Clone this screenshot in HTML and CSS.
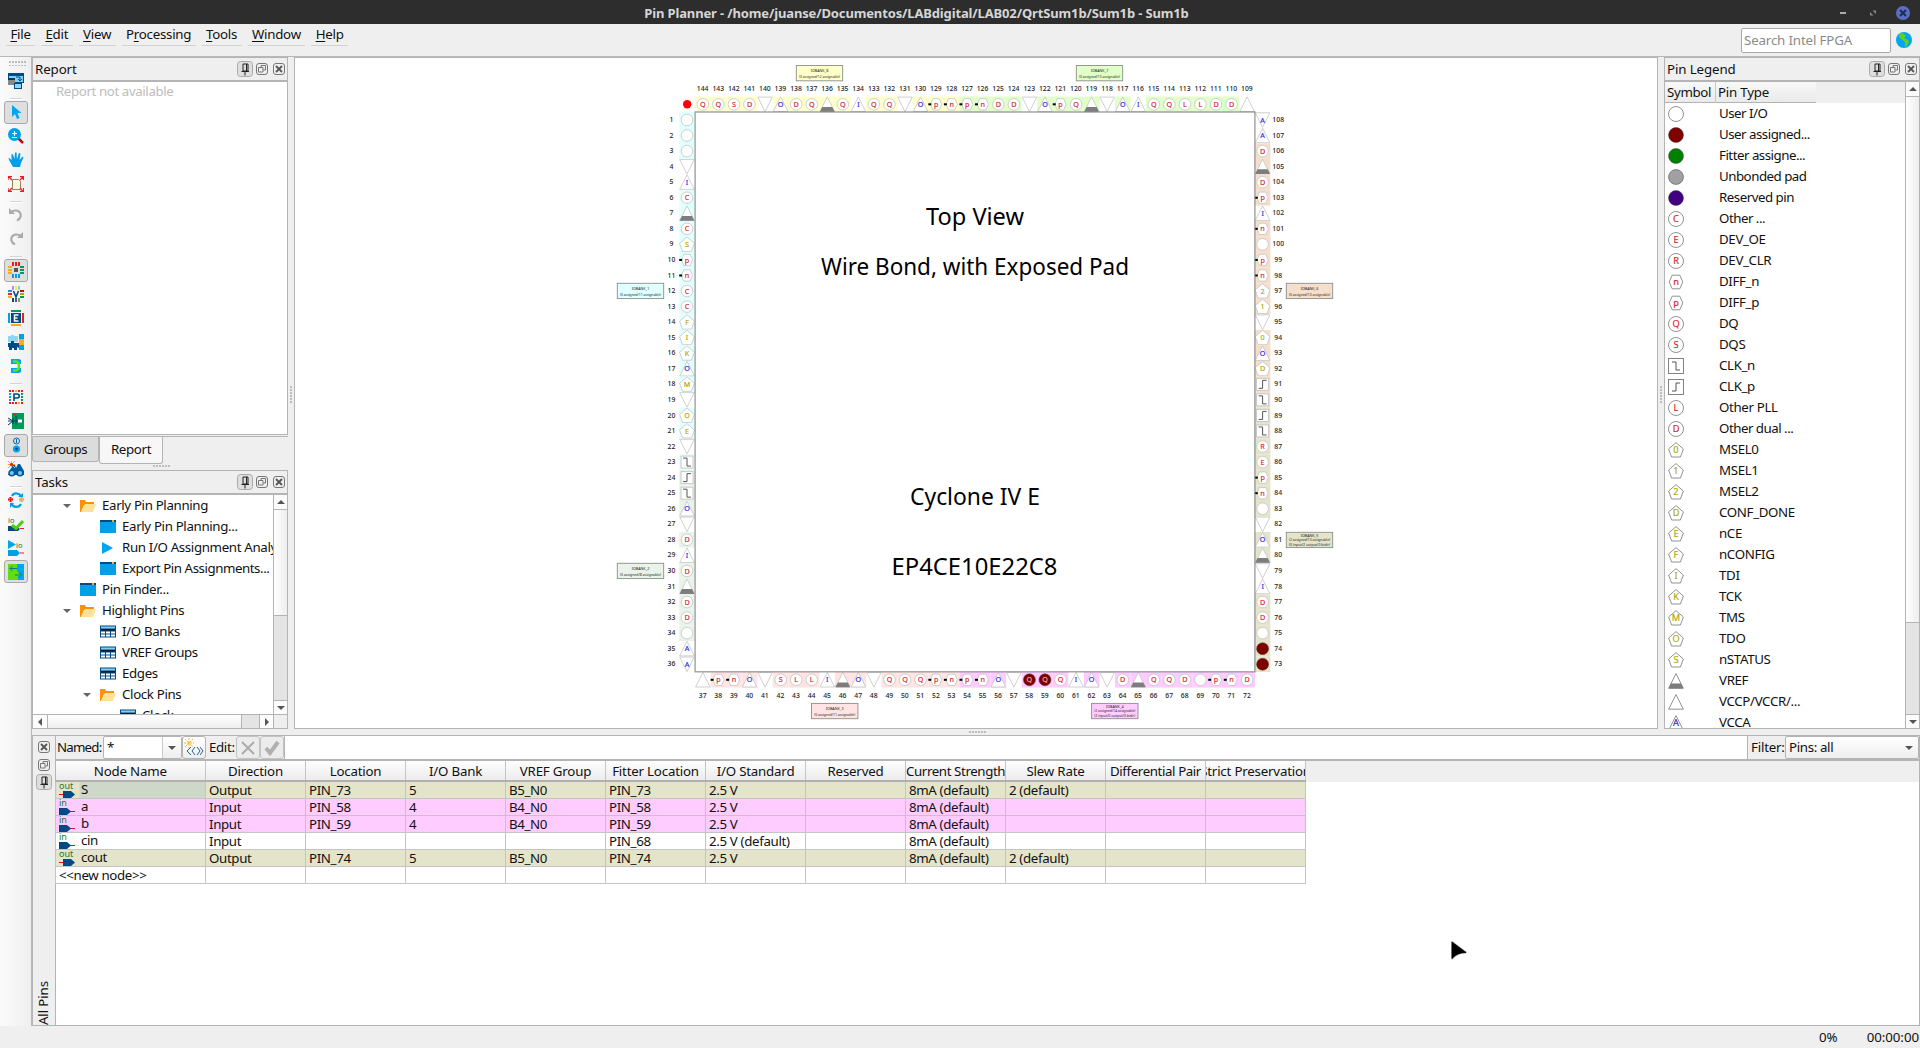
FILE: index.html
```html
<!DOCTYPE html>
<html lang="en">
<head>
<meta charset="utf-8">
<title>Pin Planner</title>
<link rel="stylesheet" href="styles.css">
</head>
<body>
<svg width="0" height="0" class="defs">
  <symbol id="pin" viewBox="0 0 16 16"><rect x=".5" y=".5" width="15" height="15" rx="3" class="pinbg"/><path d="M6 3h5v7H6zM4.500 10.500h7.500M8 11v3.500M9.500 3v7" fill="none" stroke="#222"/></symbol>
  <symbol id="float" viewBox="0 0 12 12"><rect x=".5" y=".5" width="11" height="11" rx="2.500" fill="none" stroke="#777"/><path d="M2.500 4.500h4.500v4.500H2.500zM5 4V2.500h4.500V7H7.500" fill="none" stroke="#777"/></symbol>
  <symbol id="close" viewBox="0 0 12 12"><rect x=".5" y=".5" width="11" height="11" rx="2.500" fill="none" stroke="#777"/><path d="M3 3l6 6M9 3l-6 6" stroke="#555" stroke-width="1.800"/></symbol>
  <symbol id="folder" viewBox="0 0 16 14"><path d="M0 13V1h5l1 2h8v3H4L1 13z" fill="#fb9200"/><path d="M1 13l4-8h11l-3 8z" fill="#ffe19a"/></symbol>
  <symbol id="window" viewBox="0 0 16 14"><path d="M0 1h16v12H0z" fill="#009fe8"/><path d="M0 0h16v2H0z" fill="#004a86"/><path d="M12 0h2v2h-2z" fill="#ffa51f"/></symbol>
  <symbol id="grid" viewBox="0 0 16 13"><path d="M0 0h16v12H0z" fill="#004a86"/><path d="M1 1h14v2H1z" fill="#7fd0f2"/><path d="M1 3.500h14V5H1z" fill="#001a33"/><path d="M1 6h4v2H1zM6 6h4v2H6zM11 6h4v2h-4zM1 9h4v2H1zM6 9h4v2H6zM11 9h4v2h-4z" fill="#fff"/></symbol>
  <symbol id="play" viewBox="0 0 16 14"><path d="M2 1v12l11-6z" fill="#00a6f4"/></symbol>
  <symbol id="out" viewBox="0 0 16 16"><text x="0" y="7" class="dir">out</text><path d="M0 12.500h5" stroke="#d11"/><path d="M4 9h8l4 3.500-4 3.500H4z" fill="#004a86"/></symbol>
  <symbol id="in" viewBox="0 0 16 16"><text x="0" y="7" class="dir">in</text><path d="M11 12.500h5" stroke="#d11"/><path d="M0 9h8l4 3.500-4 3.500H0z" fill="#004a86"/></symbol>
</svg>

<header class="titlebar">
  <h1>Pin Planner - /home/juanse/Documentos/LABdigital/LAB02/QrtSum1b/Sum1b - Sum1b</h1>
  <svg class="winbtns" width="80" height="24" viewBox="0 0 80 24"><path d="M3 12h6" stroke="#aaa" stroke-width="2"/><path d="M35.500 9.500h3.500V13zM33 11v3.500h3.500z" fill="#888"/><circle cx="66" cy="12" r="7" fill="#5a6fc4"/><path d="M63 9l6 6M69 9l-6 6" stroke="#222a4d" stroke-width="2"/></svg>
</header>

<nav class="menubar">
  <ul>
    <li><u>F</u>ile</li><li><u>E</u>dit</li><li><u>V</u>iew</li><li>P<u>r</u>ocessing</li><li><u>T</u>ools</li><li><u>W</u>indow</li><li><u>H</u>elp</li>
  </ul>
  <div class="search">Search Intel FPGA</div>
  <svg class="globe" width="16" height="16" viewBox="0 0 16 16"><circle cx="8" cy="8" r="8" fill="#00a6f4"/><path d="M3 2l4-1 3 3-2 2 4 2 1 2-2 4-2 1V10L5 7 3 5z" fill="#61d019"/></svg>
</nav>

<div class="work">
  <aside class="tools">
    <i class="grip"></i>
    <button><svg viewBox="0 0 16 16"><path d="M0 0h16v10H0z" fill="#004a86"/><path d="M1 3h14v6H1z" fill="#7fd0f2"/><path d="M0 5h7v7H0z" fill="#888"/><path d="M0 5h7v2H0z" fill="#003a66"/><path d="M6 10h8v6H6z" fill="#004a86"/><path d="M7 11h6v4H7z" fill="#8ed6f7"/><path d="M8 4h4v4M10 6l2 2 2-2" stroke="#004a86" fill="none"/></svg></button>
    <hr>
    <button class="on"><svg viewBox="0 0 16 16"><path d="M4 1v12l3-3 2 5 2.500-1-2-5h4z" fill="#00a6f4"/></svg></button>
    <button><svg viewBox="0 0 16 16"><path d="M10 10l5 5" stroke="#b01116" stroke-width="2.500"/><circle cx="6.500" cy="6.500" r="6.500" fill="#009fe8"/><path d="M4 5.500h5M6.500 3v5M4 9.500h5" stroke="#fff" stroke-width="1.200"/></svg></button>
    <button><svg viewBox="0 0 16 16"><path d="M5 15L1 8 .5 5.500l3 2.500L3.500 2l1.500.5L6.500 7 7 .5h1.500L9 7l2-6 1.500.5L11.500 8l3-3.500 1 1L13 11l-1 4z" fill="#009fe8"/></svg></button>
    <button><svg viewBox="0 0 16 16"><path d="M4.500 3.500h6l2 2v8h-8z" fill="#fff8df" stroke="#9b8062"/><path d="M0 0l4 4M16 0l-4 4M0 16l4-4M16 16l-4-4M0 4V.5h4M12 .5h3.500V4M0 12v3.500h4M12 15.500h3.500V12" stroke="#ed1c24" stroke-width="1.300" fill="none"/></svg></button>
    <hr>
    <button><svg viewBox="0 0 16 16"><path d="M3 5c8-5 14 4 6 8.500" stroke="#aaa" stroke-width="2.200" fill="none"/><path d="M1 1v6h6z" fill="#aaa"/></svg></button>
    <button><svg viewBox="0 0 16 16"><path d="M13 5C5 0-1 9 7 13.500" stroke="#aaa" stroke-width="2.200" fill="none"/><path d="M15 1v6H9z" fill="#aaa"/></svg></button>
    <hr>
    <button class="on"><svg viewBox="0 0 16 16"><path d="M4 0h2v4H4zM7 0h2v4H7zM10 0h2v4h-2z" fill="#ed1c24"/><path d="M0 4h4v2H0zM0 7h4v2H0zM0 10h4v2H0z" fill="#fbab18"/><path d="M12 4h4v2h-4zM12 7h4v2h-4zM12 10h4v2h-4z" fill="#009b5a"/><path d="M4 12h2v4H4zM7 12h2v4H7zM10 12h2v4h-2z" fill="#009fe8"/><path d="M6 6h4v4H6z" fill="#555"/></svg></button>
    <button><svg viewBox="0 0 16 16"><path d="M4 0h2v4H4z" fill="#c58ae0"/><path d="M7 0h2v4H7z" fill="#ffe45a"/><path d="M10 0h2v4h-2z" fill="#7cd8d0"/><path d="M0 4h4v2H0z" fill="#009fe8"/><path d="M0 7h4v2H0z" fill="#ed1c24"/><path d="M0 10h4v2H0z" fill="#fbab18"/><path d="M12 4h4v2h-4z" fill="#b01116"/><path d="M12 7h4v2h-4z" fill="#a8a800"/><path d="M12 10h4v2h-4z" fill="#009b5a"/><path d="M4 12h2v4H4z" fill="#004a86"/><path d="M7 12h2v4H7z" fill="#7a3da8"/><path d="M10 12h2v4h-2z" fill="#61b84a"/><path d="M5.500 5L8 11l2.500-6" stroke="#004a86" stroke-width="1.600" fill="none"/></svg></button>
    <button><svg viewBox="0 0 16 16"><path d="M3 0h10v2H3z" fill="#009b5a"/><path d="M0 3h2v10H0z" fill="#009fe8"/><path d="M14 3h2v10h-2z" fill="#ed1c24"/><path d="M3 14h10v2H3z" fill="#fbab18"/><path d="M3 3h10v10H3z" fill="#004a86"/><path d="M10.500 5H6.500v6h4M6.500 8h3" stroke="#fff" stroke-width="1.500" fill="none"/></svg></button>
    <button><svg viewBox="0 0 16 16"><path d="M0 2h3V1h3v1h4v6H0z" fill="#8ed6f7"/><path d="M0 9h3V7h3v2h5v5l-2-1v3H6v-2H4v2H1v-3H0z" fill="#004a86"/><path d="M11 0h5v5h-5zM11 11h5v5h-5z" fill="#009fe8"/><path d="M11 5h5v6h-5z" fill="#fbab18"/></svg></button>
    <button><svg viewBox="0 0 16 16"><path d="M3 1h8l2 1v4H3zM3 10h10v4l-2 1H3z" fill="#00a6f4"/><path d="M5 3.500h3c4 1 4 8 0 9H5" stroke="#61e019" stroke-width="2.400" fill="none"/></svg></button>
    <hr>
    <button><svg viewBox="0 0 16 16"><path d="M1 2h14M1 14h14" stroke="#ed1c24" stroke-width="2" stroke-dasharray="2 1"/><path d="M2 4v9" stroke="#009fe8" stroke-width="2" stroke-dasharray="2 1"/><path d="M14 4v9" stroke="#009b5a" stroke-width="2" stroke-dasharray="2 1"/><path d="M7 2h2M10 14h2" stroke="#fbab18" stroke-width="2"/><path d="M6 12V5h3c3 0 3 4 0 4H6" stroke="#004a86" stroke-width="1.600" fill="none"/></svg></button>
    <button><svg viewBox="0 0 16 16"><path d="M4 0h12v16H4z" fill="#009b5a"/><path d="M0 5l5 3-5 4M0 8h14M5 5v6M8 3v9" stroke="#003a66" fill="none"/><path d="M5 2l2-2 2 3z" fill="#ed1c24"/><path d="M10 6.500h4v3h-4z" fill="#fff"/></svg></button>
    <button class="on"><svg viewBox="0 0 16 16"><circle cx="8.500" cy="4" r="3" fill="none" stroke="#0068b5"/><path d="M8.500 2v4" stroke="#0068b5"/><circle cx="8.500" cy="12" r="3.600" fill="#00a6f4"/><circle cx="8.500" cy="12" r="1.400" fill="#004a86"/></svg></button>
    <button><svg viewBox="0 0 16 16"><path d="M2 9l3-5h2l1 3 2-4h2l4 7v4H0z" fill="#005b9e"/><circle cx="3.800" cy="12" r="3.500" fill="#005b9e"/><circle cx="12" cy="12" r="3.500" fill="#005b9e"/><circle cx="3.800" cy="12" r="2" fill="#7fc4ee"/><circle cx="12" cy="12" r="2" fill="#7fc4ee"/><path d="M0 0l7 7M7 0L0 7M3.500 0v7M0 3.500h7" stroke="#ffb400"/><circle cx="3.500" cy="3.500" r="1.600" fill="#ed1c24"/></svg></button>
    <hr>
    <button><svg viewBox="0 0 16 16"><path d="M4 4c2-4 8-3 9 1M3 11c2 5 8 5 10 1" stroke="#009fe8" stroke-width="2.200" fill="none"/><path d="M10 5h5V1zM6 11H2v5z" fill="#009fe8"/><circle cx="2.500" cy="7.500" r="2" fill="none" stroke="#ed1c24"/><path d="M0 7.500h5M2.500 5v5" stroke="#ed1c24"/><circle cx="13.500" cy="7.500" r="2" fill="none" stroke="#fbab18"/><path d="M11 7.500h5M13.500 5v5" stroke="#fbab18"/></svg></button>
    <button><svg viewBox="0 0 16 16"><text x="0" y="7" class="io">io</text><path d="M0 10h8l4 3-2 2H0z" fill="#004a86"/><path d="M12 12.500h4" stroke="#ed1c24"/><path d="M4 9l4 3.500L15 5" stroke="#4cd010" stroke-width="3" fill="none"/></svg></button>
    <button><svg viewBox="0 0 16 16"><path d="M0 0l8 4.500L0 9z" fill="#00a6f4"/><path d="M0 10h9l3 3-3 3H0z" fill="#009fe8"/><path d="M12 13h4" stroke="#ed1c24"/><text x="8" y="7.500" class="io">io</text></svg></button>
    <button class="on"><svg viewBox="0 0 16 16"><path d="M0 0h16v16H0z" fill="#61dd14"/><path d="M9 0h7v16h-6v-4h4l-5-5z" fill="#00a6f4"/><path d="M2 4.500h7M4.500 2L2 4.500 4.500 7M7 11h6M11 8.500l2.500 2.500-2.500 2.500" stroke="#00807c" fill="none"/></svg></button>
  </aside>

  <div class="area">
    <div class="upper">
      <div class="leftcol">
        <section class="panel report">
          <h2>Report<span class="ctl"><svg class="p"><use href="#pin"/></svg><svg><use href="#float"/></svg><svg><use href="#close"/></svg></span></h2>
          <div class="body"><p class="none">Report not available</p></div>
        </section>
        <div class="tabs"><span class="tab">Groups</span><span class="tab active">Report</span></div>
        <i class="dots"></i>
        <section class="panel tasks">
          <h2>Tasks<span class="ctl"><svg class="p"><use href="#pin"/></svg><svg><use href="#float"/></svg><svg><use href="#close"/></svg></span></h2>
          <div class="scroller">
            <ul class="tree">
              <li class="l1 open"><svg><use href="#folder"/></svg>Early Pin Planning</li>
              <li class="l2"><svg><use href="#window"/></svg>Early Pin Planning...</li>
              <li class="l2"><svg><use href="#play"/></svg>Run I/O Assignment Analysis</li>
              <li class="l2 tight"><svg><use href="#window"/></svg>Export Pin Assignments...</li>
              <li class="l1"><svg><use href="#window"/></svg>Pin Finder...</li>
              <li class="l1 open"><svg><use href="#folder"/></svg>Highlight Pins</li>
              <li class="l2"><svg><use href="#grid"/></svg>I/O Banks</li>
              <li class="l2"><svg><use href="#grid"/></svg>VREF Groups</li>
              <li class="l2"><svg><use href="#grid"/></svg>Edges</li>
              <li class="l2 open"><svg><use href="#folder"/></svg>Clock Pins</li>
              <li class="l3"><svg><use href="#grid"/></svg>Clock</li>
            </ul>
            <div class="vbar"><b class="up"></b><i></i><b class="down"></b></div>
            <div class="hbar"><b class="left"></b><i></i><b class="right"></b></div>
            <div class="corner"></div>
          </div>
        </section>
      </div>

      <i class="vdots"></i>
      <main class="canvas"><svg id="chip" width="1362" height="670" viewBox="295 58 1362 670"></svg></main>
      <i class="vdots"></i>

      <section class="panel legend">
        <h2>Pin Legend<span class="ctl"><svg class="p"><use href="#pin"/></svg><svg><use href="#float"/></svg><svg><use href="#close"/></svg></span></h2>
        <div class="legendbody">
          <div class="legendlist">
            <div class="lhead"><span>Symbol</span><span>Pin Type</span></div>
            <ul id="legend"></ul>
          </div>
          <div class="vbar"><b class="up"></b><i></i><b class="down"></b></div>
        </div>
      </section>
    </div>

    <i class="hdots"></i>

    <section class="allpins">
      <div class="side">
        <svg><use href="#close"/></svg><svg><use href="#float"/></svg><svg class="p"><use href="#pin"/></svg>
        <span>All Pins</span>
      </div>
      <div class="pinarea">
        <div class="editbar">
          <label class="named">Named:</label>
          <div class="combo"><span>*</span><b></b></div>
          <button><svg width="20" height="20" viewBox="0 0 20 20"><path d="M1 1l8 8M9 1L1 9M5 0v10M0 5h10" stroke="#fbb518" stroke-dasharray="2 1"/><path d="M7 9l-4 4 4 4M11 9l-3 4 3 4M13 9l3 4-3 4M16 9l3 4-3 4" stroke="#2b6192" fill="none"/></svg></button>
          <label class="edit">Edit:</label>
          <button class="off"><svg width="20" height="20" viewBox="0 0 20 20"><path d="M4 4l12 12M16 4L4 16" stroke="#aaa" stroke-width="1.800"/></svg></button>
          <button class="off"><svg width="20" height="20" viewBox="0 0 20 20"><path d="M4 10l4 5 8-11" stroke="#b0b0b0" stroke-width="4" fill="none"/></svg></button>
          <div class="field"></div>
          <label class="filter">Filter:</label>
          <div class="combo wide"><span>Pins: all</span><b></b></div>
        </div>
        <div class="sheet">
          <table>
            <colgroup><col class="first"><col span="11"></colgroup>
            <thead><tr><th>Node Name</th><th>Direction</th><th>Location</th><th>I/O Bank</th><th>VREF Group</th><th>Fitter Location</th><th>I/O Standard</th><th>Reserved</th><th>Current Strength</th><th>Slew Rate</th><th>Differential Pair</th><th class="cut"><span>Strict Preservation</span></th></tr></thead>
            <tbody>
              <tr class="b5"><td class="node sel"><svg><use href="#out"/></svg><span>S</span></td><td>Output</td><td>PIN_73</td><td>5</td><td>B5_N0</td><td>PIN_73</td><td>2.5 V</td><td></td><td>8mA (default)</td><td>2 (default)</td><td></td><td></td></tr>
              <tr class="b4"><td class="node"><svg><use href="#in"/></svg><span>a</span></td><td>Input</td><td>PIN_58</td><td>4</td><td>B4_N0</td><td>PIN_58</td><td>2.5 V</td><td></td><td>8mA (default)</td><td></td><td></td><td></td></tr>
              <tr class="b4"><td class="node"><svg><use href="#in"/></svg><span>b</span></td><td>Input</td><td>PIN_59</td><td>4</td><td>B4_N0</td><td>PIN_59</td><td>2.5 V</td><td></td><td>8mA (default)</td><td></td><td></td><td></td></tr>
              <tr><td class="node"><svg><use href="#in"/></svg><span>cin</span></td><td>Input</td><td></td><td></td><td></td><td>PIN_68</td><td>2.5 V (default)</td><td></td><td>8mA (default)</td><td></td><td></td><td></td></tr>
              <tr class="b5"><td class="node"><svg><use href="#out"/></svg><span>cout</span></td><td>Output</td><td>PIN_74</td><td>5</td><td>B5_N0</td><td>PIN_74</td><td>2.5 V</td><td></td><td>8mA (default)</td><td>2 (default)</td><td></td><td></td></tr>
              <tr><td>&lt;&lt;new node&gt;&gt;</td><td></td><td></td><td></td><td></td><td></td><td></td><td></td><td></td><td></td><td></td><td></td></tr>
            </tbody>
          </table>
        </div>
      </div>
    </section>
  </div>
</div>

<footer class="status"><span>0%</span><span>00:00:00</span></footer>

<svg class="pointer" width="18" height="22" viewBox="0 0 18 22"><path d="M2 2v16.500q5-6 14-6z" fill="#000" stroke="#bbb" stroke-width="2" stroke-linejoin="round"/><path d="M2 2v16.500q5-6 14-6z" fill="#000" stroke="#000" stroke-width=".8" stroke-linejoin="round"/></svg>
<script src="script.js"></script>
</body>
</html>
```
FILE: styles.css
```css
* { box-sizing: border-box; }
body { margin: 0; width: 1920px; height: 1048px; overflow: hidden; display: flex; flex-direction: column; background: #efefef; color: #111; font: 13.3px/17px "Noto Sans", "Open Sans", sans-serif; letter-spacing: -0.35px; }
ul { list-style: none; margin: 0; padding: 0; }
i, b { display: block; }
button { margin: 0; font: inherit; }
.defs { display: none; }

.titlebar { flex: none; height: 24px; background: #2d2d2d; color: #d6d6d6; display: grid; grid-template-columns: 1833px 80px; gap: 4px; align-items: center; }
h1 { margin: 0; font-size: 13px; font-weight: 700; line-height: 26px; text-align: center; letter-spacing: -0.14px; }

.menubar { flex: none; height: 33px; display: flex; align-items: flex-start; border-bottom: 1px solid #b8b8b8; }
.menubar ul { display: flex; gap: 6px; padding-left: 6px; flex: 1; }
.menubar li { height: 22px; padding: 2px 4.4px 0; border-bottom: 1px solid #d2d2d2; letter-spacing: -0.25px; }
.menubar u { text-underline-offset: 2px; }
.search { width: 150px; height: 25px; margin: 4px 5px 0 0; border: 1px solid #a8a8a8; border-radius: 2px; background: #fff; color: #8a8a8a; padding: 3px 2px; white-space: nowrap; letter-spacing: -0.15px; }
.globe { margin: 8px 8px 0 0; }

.work { flex: none; height: 969px; display: flex; }
.tools { width: 32px; padding-left: 4px; background: linear-gradient(90deg, #fbfbfb, #efefef); border-right: 1px solid #b8b8b8; display: flex; flex-direction: column; flex: none; }
.tools .grip { width: 17px; height: 5px; margin: 4px 0 3px 5px; background: radial-gradient(circle at 1px 1px, #bbb 0.7px, transparent 1px) 0 0/3px 4px; }
.tools button { width: 24px; height: 23px; margin-bottom: 1px; flex: none; border: 1px solid transparent; border-radius: 3px; background: none; padding: 0; display: flex; align-items: center; justify-content: center; }
.tools button.on { background: #dedede; border-color: #a9a9a9; }
.tools svg { width: 16px; height: 16px; display: block; }
.tools hr { width: 12px; height: 2px; border: 0; background: #d4d4d4; margin: 4px 0 0.9px 6px; flex: none; border-bottom: 1px solid #fff; }
.tools hr:first-of-type { margin-top: 5px; }
.io { font: 7.500px "Noto Sans", sans-serif; fill: #1c6b2c; }
.dir { font: 9px "Noto Sans", sans-serif; fill: #1c7a2c; letter-spacing: 0; }

.area { flex: 1; min-width: 0; display: flex; flex-direction: column; }
.upper { height: 672px; display: flex; flex: none; }
.leftcol { width: 256px; flex: none; display: flex; flex-direction: column; }
.panel { border: 1px solid #b4b4b4; display: flex; flex-direction: column; background: #fff; min-height: 0; }
.panel h2 { margin: 0; height: 24px; flex: none; padding-left: 2px; font-size: 13.3px; font-weight: 400; line-height: 23px; letter-spacing: -0.1px; background: #efefef; border-bottom: 2px solid #b4b4b4; display: flex; justify-content: space-between; align-items: center; }
.ctl { display: flex; align-items: center; gap: 5px; padding-right: 2px; }
.ctl svg, .side svg { width: 12px; height: 12px; display: block; }
.ctl svg.p { width: 16px; height: 16px; margin-right: -2px; }
.pinbg { fill: #dedede; stroke: #aaa; }
.report { height: 378px; }
.none { margin: 0; padding: 1px 0 0 23px; color: #bdbdbd; letter-spacing: -0.4px; }
.tabs { height: 28px; display: flex; align-items: flex-start; border-top: 1px solid #b4b4b4; margin-top: 1px; flex: none; }
.tab { height: 25px; width: 67px; text-align: center; line-height: 24px; letter-spacing: -0.35px; background: #dcdcdc; border: 1px solid #b4b4b4; border-top: 0; border-radius: 0 0 3px 3px; }
.tab.active { height: 27px; width: 64px; background: #f7f7f7; line-height: 25px; }
.dots { width: 17px; height: 2px; margin: 1px 0 3px 121px; background: radial-gradient(circle at 1px 1px, #bbb 0.7px, transparent 1px) 0 0/3px 4px; flex: none; }
.tasks { flex: 1; }
.scroller { flex: 1; min-height: 0; display: grid; grid-template: 219px 14px / 240px 14px; }
.tree { overflow: hidden; }
.tree li { height: 21px; display: flex; align-items: center; gap: 6px; white-space: nowrap; }
.tree li.tight { letter-spacing: -0.45px; }
.tree li svg { width: 16px; height: 14px; flex: none; }
.l1 { padding-left: 47px; }
.l2 { padding-left: 67px; }
.l3 { padding-left: 87px; }
.open::before { content: ""; border: 4px solid transparent; border-top: 4px solid #666; border-bottom: 0; margin: 0 3px 0 -17px; }
.vbar { border-left: 1px solid #b4b4b4; background: #e4e4e4; display: flex; flex-direction: column; align-items: stretch; }
.vbar b { height: 14px; background: #fcfcfc; display: flex; align-items: center; justify-content: center; }
.vbar b::before, .hbar b::before, .combo b::before { content: ""; border: 4px solid transparent; }
.up::before { border-bottom-color: #555 !important; border-top-width: 0 !important; }
.down::before, .combo b::before { border-top-color: #555 !important; border-bottom-width: 0 !important; }
.left::before { border-right-color: #555 !important; border-left-width: 0 !important; }
.right::before { border-left-color: #555 !important; border-right-width: 0 !important; }
.vbar i { height: 107px; background: linear-gradient(90deg, #fff, #eee); border: solid #b4b4b4; border-width: 1px 0; }
.vbar .down { margin-top: auto; border-top: 1px solid #b4b4b4; }
.hbar { border-top: 1px solid #b4b4b4; background: #e4e4e4; display: flex; }
.hbar b { width: 14px; background: #fcfcfc; display: flex; align-items: center; justify-content: center; }
.hbar i { width: 195px; background: linear-gradient(#fff, #eee); border: solid #b4b4b4; border-width: 0 1px; }
.hbar .right { margin-left: auto; border-left: 1px solid #b4b4b4; }
.corner { background: #efefef; border: solid #b4b4b4; border-width: 1px 0 0 1px; }

.vdots { width: 6px; padding: 329px 0 0 2px; }
.vdots::before { content: ""; display: block; width: 3px; height: 17px; background: radial-gradient(circle at 1px 1px, #bbb 0.7px, transparent 1px) 0 0/3px 3px; }
.canvas { width: 1364px; flex: none; border: 1px solid #b4b4b4; background: #fff; }
.canvas svg { display: block; letter-spacing: 0; }
.legend { flex: 1; }
.legendbody { flex: 1; display: flex; min-height: 0; }
.legendlist { flex: 1; overflow: hidden; }
.legend .vbar { width: 14px; }
.legend .vbar i { height: 527px; }
.lhead { height: 21px; background: #efefef; display: flex; line-height: 21px; letter-spacing: 0; }
.lhead span { background: linear-gradient(#f8f8f8, #eaeaea); border-bottom: 1px solid #b4b4b4; padding-left: 2px; }
.lhead span:first-child { width: 51px; border-right: 1px solid #c8c8c8; letter-spacing: -0.35px; }
.lhead span:last-child { width: 100px; letter-spacing: -0.2px; }
#legend li { height: 21px; display: flex; gap: 35px; padding-left: 3px; align-items: center; white-space: nowrap; }
#legend li:nth-child(-n+6), #legend li:nth-child(16) { letter-spacing: -0.5px; }
#legend svg { width: 16px; height: 16px; flex: none; letter-spacing: 0; }

.hdots { height: 4px; width: 17px; flex: none; margin: 2px 0 0 937px; background: radial-gradient(circle at 1px 1px, #bbb 0.7px, transparent 1px) 0 0/3px 4px; }
.allpins { flex: none; height: 291px; border: 1px solid #b4b4b4; display: flex; background: #fff; }
.side { width: 23px; background: #efefef; border-right: 1px solid #b4b4b4; display: flex; flex-direction: column; align-items: center; padding: 5px 1px 0 0; gap: 6px; flex: none; }
.side svg.p { width: 16px; height: 16px; margin-top: -3px; }
.side span { writing-mode: vertical-rl; transform: rotate(180deg); margin-top: auto; letter-spacing: -0.1px; }
.pinarea { flex: 1; min-width: 0; display: flex; flex-direction: column; }
.editbar { height: 25px; background: #efefef; border-bottom: 2px solid #b4b4b4; display: flex; align-items: stretch; line-height: 23px; flex: none; }
.named { width: 47px; padding-left: 1px; letter-spacing: -0.8px; white-space: nowrap; }
.edit { width: 30px; padding-left: 3px; }
.filter { width: 37px; padding-left: 3px; letter-spacing: -0.2px; }
.combo { width: 79px; border: 1px solid #b4b4b4; border-radius: 2px; background: #fff; display: flex; justify-content: space-between; padding-left: 3px; line-height: 21px; }
.combo b { width: 19px; background: linear-gradient(#fff, #eee); border-left: 1px solid #c8c8c8; display: flex; align-items: center; justify-content: center; }
.combo.wide { width: 134px; background: linear-gradient(#fff, #eee); }
.combo.wide b { border: 0; background: none; }
.editbar button { width: 24px; padding: 0; border: 1px solid #b4b4b4; border-radius: 3px; background: linear-gradient(#fff, #eee); display: flex; align-items: center; justify-content: center; }
.editbar button.off { background: #ececec; border-color: #c4c4c4; }
.field { flex: 1; background: #fff; border: solid #b4b4b4; border-width: 0 1px; }
.sheet { flex: 1; background: linear-gradient(#efefef 21px, #fff 21px); }
table { border-collapse: collapse; table-layout: fixed; width: 1251px; margin-left: -1px; }
col { width: 100px; }
col.first { width: 150px; }
th { height: 20px; padding: 0; font-weight: 400; line-height: 18px; letter-spacing: -0.2px; white-space: nowrap; overflow: hidden; background: linear-gradient(#fdfdfd, #ececec); border-right: 1px solid #c4c4c4; border-bottom: 2px solid #b0b0b0; }
th:nth-child(9), th:nth-child(11) { letter-spacing: -0.4px; }
.cut span { display: block; margin: 0 -12px; }
td { height: 17px; padding: 0 0 0 3px; line-height: 15px; border: 1px solid #c4c4c4; white-space: nowrap; overflow: hidden; }
.b5 td { background: #e4e4ca; }
.b4 td { background: #ffccff; }
.node svg { width: 16px; height: 16px; float: left; }
.node span { display: block; padding-left: 22px; }
.b5 .sel { background: linear-gradient(90deg, #e4e4ca 23px, #cdd8c8 23px); }

.status { flex: 1; display: flex; justify-content: flex-end; gap: 29px; padding-right: 1px; line-height: 22px; letter-spacing: -0.05px; }
.pointer { position: absolute; left: 1450px; top: 940px; }
.pinnum { font: 500 6.800px "Noto Sans", sans-serif; fill: #222; text-anchor: middle; }
.glyph { font-family: "Noto Sans", sans-serif; text-anchor: middle; stroke-width: .15; }
.banktext { font: 3.700px "Noto Sans", sans-serif; fill: #222; text-anchor: middle; }
.chiptext { font: 24px "Noto Sans", sans-serif; fill: #000; }
```
FILE: script.js
```js
const RED = '#d8232a', BLUE = '#2424e0', OLIVE = '#aaaa00';

// Draws one pin symbol centred on (x, y). Codes: shape letter, then the label.
// c circle, h hexagon, p pentagon, u/d triangle up/down, r VREF, n/k clock, f filled circle
function symbol(code, x, y, small) {
  const shape = code[0], label = code.slice(1);
  const line = small ? '#c4c4c4' : '#777';
  const r = small ? 5.8 : 7.5;
  const poly = pts => `<polygon points="${pts.map(p => (x + p[0]) + ',' + (y + p[1])).join(' ')}" fill="#fff" stroke="${line}" stroke-width=".8"/>`;
  let out = '', color = RED;
  if (shape === 'c') out = `<circle cx="${x}" cy="${y}" r="${r}" fill="#fff" stroke="${line}" stroke-width=".8"/>`;
  if (shape === 'f') {
    out = `<circle cx="${x}" cy="${y}" r="${small ? 6 : 7.5}" fill="${small ? '#800000' : '#' + label}" stroke="#444" stroke-width=".5"/>`;
    color = '#eab8b8';
  }
  if (shape === 'h') {
    const k = small ? 0.83 : 1;
    out = poly([[-6.8, 0], [-3.8, -6.8], [3.8, -6.8], [6.8, 0], [3.8, 6.8], [-3.8, 6.8]].map(p => [p[0] * k, p[1] * k]));
    if (small) out += `<rect x="${x - 7.8}" y="${y - 1}" width="3" height="2" fill="#000"/>`;
  }
  if (shape === 'p') { out = poly([[0, -7.4], [7.4, -1], [4.4, 7], [-4.4, 7], [-7.4, -1]]); color = OLIVE; }
  if (shape === 'u' || shape === 'r') { out = poly([[0, -7.4], [7.3, 7.2], [-7.3, 7.2]]); color = BLUE; }
  if (shape === 'd') { out = poly([[0, 7.4], [7.3, -7.2], [-7.3, -7.2]]); color = BLUE; }
  if (shape === 'r') out += `<polygon points="${x - 5},${y + 2.6} ${x + 5},${y + 2.6} ${x + 7.4},${y + 7.4} ${x - 7.4},${y + 7.4}" fill="#7d7d7d"/>`;
  if (shape === 'n' || shape === 'k') {
    const s = small ? 6 : 7.5;
    const d = shape === 'n' ? `M${x - 4} ${y - 4}h4v8h4` : `M${x - 4} ${y + 4}h4v-8h4`;
    out = `<rect x="${x - s}" y="${y - s}" width="${2 * s}" height="${2 * s}" fill="#fff" stroke="${line}" stroke-width=".9"/><path d="${d}" fill="none" stroke="#555"/>`;
  }
  if (label && !(shape === 'f' && !small)) {
    out += `<text x="${x}" y="${y + (small ? 2.6 : 3)}" class="glyph" font-size="${small ? 7.2 : 9.2}" fill="${color}" stroke="${color}">${label}</text>`;
  }
  return out;
}

const STEP = 15.55, LEFT = 695.1, TOP = 112.2, SIZE = STEP * 36;
// Background runs: one letter per cell; "-" leaves the cell blank.
const edges = {
  top: {
    first: 144, dir: -1,
    pins: 'cQ cQ cS cD d uO cD cQ r cQ uI cQ cQ d uO hp hn hp hn cD cD d uO hp cQ r d uO uI cQ cQ cL cL cD cD u',
    bg: 'YYYY-YYYYY-YY-YYYGGGG-GGGG-G-GGGGGG-'
  },
  left: {
    first: 1, dir: 1,
    pins: 'c c c d uI cC r cC pS hp hn cC cC pF pI pK uO pM d pO pE d n k n uO d cD uI cD r cD cD c uA dA',
    bg: 'CCC--CCCCCCCCCCCCC-CC-CEEE-E-EEEEE--'
  },
  bottom: {
    first: 37, dir: 1,
    pins: 'u hp hn uO d cS cL cL uI r uO d cQ cQ cQ hp hn hp hn uO d fQ fQ cQ uI uO d cD r cQ cQ cD c hp hn cD',
    bg: '-PPP-PPP-PP-PPPPPMMM-MMM-M-MMMMMMMMM'
  },
  right: {
    first: 108, dir: -1,
    pins: 'dA uA cD r cD hp uI hn c hp hn p2 p1 d p0 uO pD k n k n cR cE hp hn c d uO r d uI cD cD c f f',
    bg: '--OOOO-OOOOOO-OOOOOLLLLLLL-LL--LLLLL'
  }
};
const colors = { Y: '#ffffcc', G: '#e1ffc8', C: '#e0ffff', E: '#e9f3e9', P: '#ffe4e4', M: '#ffccff', O: '#f5dfcc', L: '#e4e4ca' };

let svg = '';
for (const [side, e] of Object.entries(edges)) {
  e.pins.split(' ').forEach((code, i) => {
    const along = (i + 0.5) * STEP;
    let x, y, nx, ny;
    if (side === 'top') { x = LEFT + along; y = 104.3; nx = x - 0.2; ny = 91; }
    if (side === 'bottom') { x = LEFT + along; y = 679.8; nx = x - 0.2; ny = 697.8; }
    if (side === 'left') { x = 687; y = TOP + along; nx = 671.4; ny = y + 2.1; }
    if (side === 'right') { x = 1262.6; y = TOP + along; nx = 1278.2; ny = y + 2.1; }
    if (e.bg[i] !== '-') svg += `<rect x="${x - 7.8}" y="${y - 7.8}" width="15.6" height="15.6" fill="${colors[e.bg[i]]}"/>`;
    svg += symbol(code, x, y, true);
    svg += `<text x="${nx}" y="${ny}" class="pinnum">${e.first + e.dir * i}</text>`;
  });
}
svg += '<circle cx="687.2" cy="104.200" r="4.200" fill="#f00"/>';
svg += `<rect x="${LEFT}" y="${TOP - 0.2}" width="${SIZE}" height="${SIZE}" fill="none" stroke="#808080" stroke-opacity=".75" stroke-width="1.4"/>`;

const banks = [
  [796.3, 65.5, 'Y', 'IOBANK_8', '(0 assigned/12 assignable)'],
  [1076.3, 65.5, 'G', 'IOBANK_7', '(0 assigned/13 assignable)'],
  [617.3, 283.3, 'C', 'IOBANK_1', '(0 assigned/11 assignable)'],
  [617.3, 563.3, 'E', 'IOBANK_2', '(0 assigned/8 assignable)'],
  [811.5, 703.4, 'P', 'IOBANK_3', '(0 assigned/11 assignable)'],
  [1091.6, 703.4, 'M', 'IOBANK_4', '(2 assigned/14 assignable)', '(2 input/0 output/0 bidir)'],
  [1286.3, 283.3, 'O', 'IOBANK_6', '(0 assigned/13 assignable)'],
  [1286.3, 532.3, 'L', 'IOBANK_5', '(2 assigned/13 assignable)', '(0 input/2 output/0 bidir)']
];
for (const [x, y, c, ...lines] of banks) {
  svg += `<rect x="${x}" y="${y}" width="46.4" height="15.300" fill="${colors[c]}" stroke="#8a8f88" stroke-width=".9"/>`;
  const gap = lines.length === 2 ? 6 : 4.8;
  const start = lines.length === 2 ? 6.5 : 4.2;
  lines.forEach((t, i) => {
    const fit = i > 0 ? ' textLength="41" lengthAdjust="spacingAndGlyphs"' : '';
    svg += `<text x="${x + 23.2}" y="${y + start + i * gap}"${fit} class="banktext">${t}</text>`;
  });
}
[['Top View', 926, 225, 98], ['Wire Bond, with Exposed Pad', 821, 275, 308], ['Cyclone IV E', 910, 505, 130], ['EP4CE10E22C8', 891.5, 575, 166]]
  .forEach(([t, x, y, w]) => { svg += `<text x="${x}" y="${y}" textLength="${w}" lengthAdjust="spacingAndGlyphs" class="chiptext">${t}</text>`; });
document.getElementById('chip').innerHTML = svg;

const legend = [
  ['c', 'User I/O'], ['f800000', 'User assigned...'], ['f008000', 'Fitter assigne...'], ['fa0a0a4', 'Unbonded pad'], ['f400080', 'Reserved pin'],
  ['cC', 'Other ...'], ['cE', 'DEV_OE'], ['cR', 'DEV_CLR'], ['hn', 'DIFF_n'], ['hp', 'DIFF_p'], ['cQ', 'DQ'], ['cS', 'DQS'], ['n', 'CLK_n'], ['k', 'CLK_p'],
  ['cL', 'Other PLL'], ['cD', 'Other dual ...'], ['p0', 'MSEL0'], ['p1', 'MSEL1'], ['p2', 'MSEL2'], ['pD', 'CONF_DONE'], ['pE', 'nCE'], ['pF', 'nCONFIG'],
  ['pI', 'TDI'], ['pK', 'TCK'], ['pM', 'TMS'], ['pO', 'TDO'], ['pS', 'nSTATUS'], ['r', 'VREF'], ['u', 'VCCP/VCCR/...'], ['uA', 'VCCA']
];
document.getElementById('legend').innerHTML = legend
  .map(([code, name]) => `<li><svg viewBox="0 0 16 16">${symbol(code, 8, 8, false)}</svg>${name}</li>`).join('');
```
